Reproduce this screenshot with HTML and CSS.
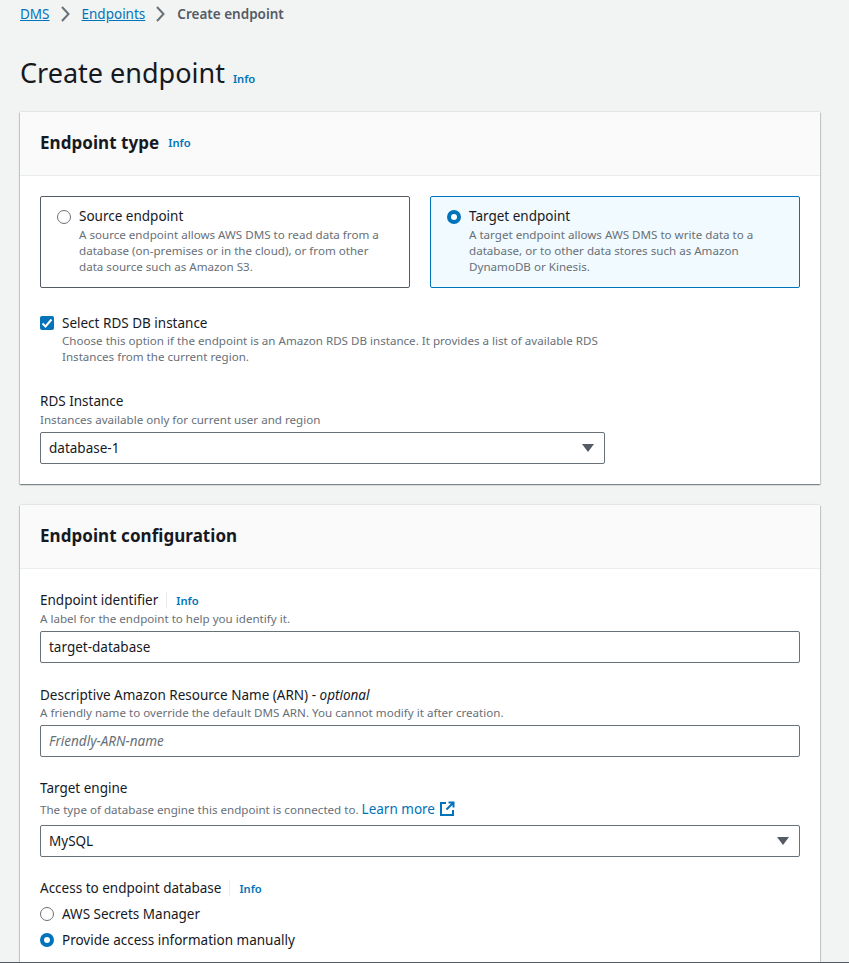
FILE: index.html
```html
<!DOCTYPE html>
<html lang="en">
<head>
    <meta charset="UTF-8">
    <title>Create endpoint</title>
    <link rel="stylesheet" href="styles.css">
</head>
<body>
    <nav class="crumbs">
        <a href="#">DMS</a>
        <svg class="crumb-sep" width="16" height="16" viewBox="0 0 16 16"><path d="M4 1 10.5 8 4 15" fill="none" stroke="#687078" stroke-width="2"/></svg>
        <a href="#">Endpoints</a>
        <svg class="crumb-sep" width="16" height="16" viewBox="0 0 16 16"><path d="M4 1 10.5 8 4 15" fill="none" stroke="#687078" stroke-width="2"/></svg>
        <span class="crumb-current">Create endpoint</span>
    </nav>

    <header class="page-head">
        <h1>Create endpoint</h1>
        <a class="info" href="#">Info</a>
    </header>

    <section class="card card-type">
        <div class="card-head">
            <h2>Endpoint type</h2>
            <a class="info" href="#">Info</a>
        </div>
        <div class="card-body">
            <div class="tiles">
                <div class="tile">
                    <span class="radio"></span>
                    <div>
                        <div class="label">Source endpoint</div>
                        <div class="hint">A source endpoint allows AWS DMS to read data from a database (on-premises or in the cloud), or from other data source such as Amazon S3.</div>
                    </div>
                </div>
                <div class="tile selected">
                    <span class="radio checked"></span>
                    <div>
                        <div class="label">Target endpoint</div>
                        <div class="hint">A target endpoint allows AWS DMS to write data to a database, or to other data stores such as Amazon DynamoDB or Kinesis.</div>
                    </div>
                </div>
            </div>

            <div class="check-row">
                <span class="checkbox">
                    <svg width="14" height="14" viewBox="0 0 14 14"><path d="M2.5 7.5 5.5 10.5 11.5 3.5" fill="none" stroke="#fff" stroke-width="2"/></svg>
                </span>
                <div>
                    <div class="label">Select RDS DB instance</div>
                    <div class="hint check-hint">Choose this option if the endpoint is an Amazon RDS DB instance. It provides a list of available RDS Instances from the current region.</div>
                </div>
            </div>

            <div class="field rds-field">
                <div class="label">RDS Instance</div>
                <div class="hint">Instances available only for current user and region</div>
                <div class="select rds-select">
                    <span>database-1</span>
                    <span class="caret"></span>
                </div>
            </div>
        </div>
    </section>

    <section class="card card-config">
        <div class="card-head">
            <h2>Endpoint configuration</h2>
        </div>
        <div class="card-body">
            <div class="field">
                <div class="label">Endpoint identifier<span class="divider"></span><a class="info" href="#">Info</a></div>
                <div class="hint">A label for the endpoint to help you identify it.</div>
                <div class="input">target-database</div>
            </div>
            <div class="field">
                <div class="label">Descriptive Amazon Resource Name (ARN) - <em>optional</em></div>
                <div class="hint">A friendly name to override the default DMS ARN. You cannot modify it after creation.</div>
                <div class="input placeholder">Friendly-ARN-name</div>
            </div>
            <div class="field engine-field">
                <div class="label">Target engine</div>
                <div class="hint hint-link">The type of database engine this endpoint is connected to. <a class="learn" href="#">Learn more<svg width="16" height="16" viewBox="0 0 16 16"><path d="M7 2H2v12h12V9M9.5 1.5h5v5M14 2 7.5 8.5" fill="none" stroke="#0073bb" stroke-width="2"/></svg></a></div>
                <div class="select">
                    <span>MySQL</span>
                    <span class="caret"></span>
                </div>
            </div>
            <div class="field access-field">
                <div class="label">Access to endpoint database<span class="divider"></span><a class="info" href="#">Info</a></div>
                <div class="radio-row"><span class="radio"></span><span class="label">AWS Secrets Manager</span></div>
                <div class="radio-row"><span class="radio checked"></span><span class="label">Provide access information manually</span></div>
            </div>
        </div>
    </section>
</body>
</html>
```

FILE: styles.css
```css
html, body {
    height: 963px;
    overflow: hidden;
}
body {
    box-sizing: border-box;
    margin: 0;
    padding: 0 29px 0 20px;
    background: #f2f3f3;
    border-bottom: 1px solid #545b64;
    font-family: "Noto Sans", sans-serif;
    font-size: 13.5px;
    line-height: 20px;
    color: #16191f;
}
a {
    color: #0073bb;
}
.crumbs {
    display: flex;
    align-items: center;
    height: 28px;
    gap: 8px;
}
.crumb-current {
    font-weight: 600;
    color: #545b64;
}
.page-head {
    display: flex;
    align-items: baseline;
    gap: 8px;
    margin-top: 26px;
    height: 58px;
}
h1 {
    margin: 0;
    font-size: 27px;
    line-height: 38px;
    font-weight: 400;
}
.info {
    font-size: 11.2px;
    font-weight: 600;
    text-decoration: none;
}
.card {
    background: #fff;
    box-shadow: 0 1px 1px 0 rgba(0, 28, 36, 0.3), 1px 1px 1px 0 rgba(0, 28, 36, 0.15), -1px 1px 1px 0 rgba(0, 28, 36, 0.15), 0 -1px 1px 0 rgba(0, 28, 36, 0.06);
}
.card-config {
    margin-top: 21px;
}
.card-head {
    display: flex;
    align-items: center;
    gap: 9px;
    box-sizing: border-box;
    height: 64px;
    padding: 0 20px 2px;
    background: #fafafa;
    border-bottom: 1px solid #eaeded;
}
h2 {
    margin: 0;
    font-size: 17px;
    line-height: 22px;
    font-weight: 700;
    letter-spacing: 0.05px;
}
.card-body {
    padding: 20px;
}
.tiles {
    display: grid;
    grid-template-columns: 1fr 1fr;
    gap: 20px;
}
.tile {
    display: flex;
    gap: 8px;
    height: 92px;
    box-sizing: border-box;
    padding: 9px 16px;
    border: 1px solid #545b64;
    border-radius: 2px;
}
.tile.selected {
    background: #f1faff;
    border-color: #0073bb;
}
.tile .hint {
    margin-top: 1px;
}
.label {
    font-size: 13.5px;
    line-height: 20px;
    color: #16191f;
}
.label em {
    font-style: italic;
}
.hint {
    font-size: 11.6px;
    line-height: 16px;
    color: #687078;
}
.hint-link {
    line-height: 23px;
}
.radio {
    flex: none;
    box-sizing: border-box;
    width: 14px;
    height: 14px;
    margin-top: 4px;
    border: 1px solid #687078;
    border-radius: 50%;
    background: #fff;
}
.radio.checked {
    border: 4px solid #0073bb;
}
.check-row {
    display: flex;
    gap: 8px;
    margin-top: 25px;
}
.checkbox {
    flex: none;
    display: flex;
    align-items: center;
    justify-content: center;
    width: 14px;
    height: 14px;
    margin-top: 3px;
    background: #0073bb;
    border-radius: 2px;
}
.check-hint {
    width: 545px;
}
.field {
    margin-top: 22px;
}
.field:first-child {
    margin-top: 1px;
}
.rds-field {
    margin-top: 26px;
}
.rds-field .hint {
    margin-top: 1px;
}
.engine-field {
    margin-top: 21px;
}
.input, .select {
    display: flex;
    align-items: center;
    justify-content: space-between;
    box-sizing: border-box;
    height: 32px;
    margin-top: 4px;
    padding: 0 8px;
    background: #fff;
    border: 1px solid #687078;
    border-radius: 2px;
}
.rds-select {
    width: 565px;
}
.placeholder {
    font-style: italic;
    color: #687078;
}
.caret {
    width: 0;
    height: 0;
    margin-right: 2px;
    border-left: 6px solid transparent;
    border-right: 6px solid transparent;
    border-top: 8px solid #545b64;
}
.divider {
    display: inline-block;
    width: 1px;
    height: 16px;
    margin: 0 9px 0 8px;
    background: #eaeded;
    vertical-align: -3px;
}
.learn {
    font-size: 13.5px;
    text-decoration: none;
}
.learn svg {
    margin-left: 4px;
    vertical-align: -3px;
}
.access-field {
    margin-top: 21px;
}
.radio-row {
    display: flex;
    gap: 8px;
    margin-top: 6px;
}
.access-field .label + .radio-row {
    margin-top: 5px;
}
.radio-row .radio {
    margin-top: 3px;
}
```
